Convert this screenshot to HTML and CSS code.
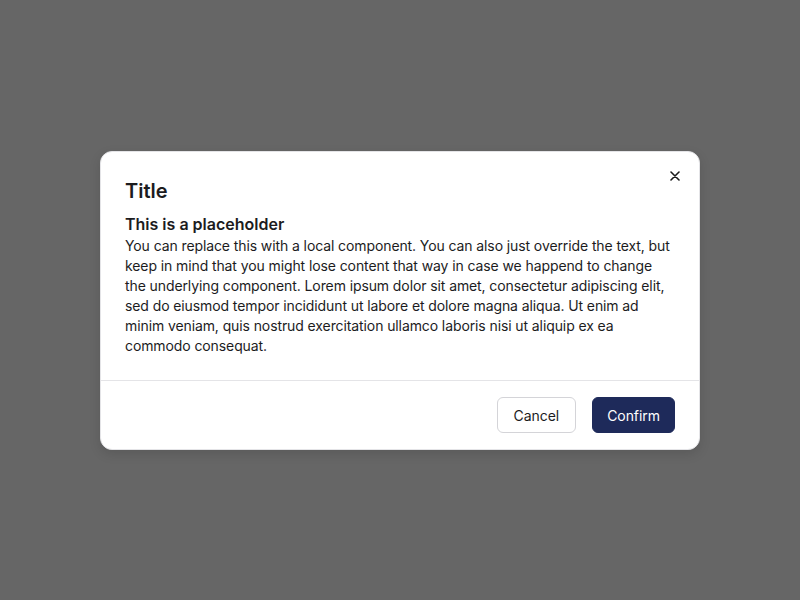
FILE: index.html
```html
<!DOCTYPE html>
<html>
<head>
<meta charset="utf-8">
<link rel="stylesheet" href="styles.css">
</head>
<body>
<div class="overlay">
  <div class="modal">
    <button class="close" aria-label="Close">
      <svg width="10" height="10" viewBox="0 0 10 10"><path d="M1 1L9 9M9 1L1 9" stroke="#1a1a1a" stroke-width="1.6" stroke-linecap="round"/></svg>
    </button>
    <div class="content">
      <h1 class="title">Title</h1>
      <h2 class="subtitle">This is a placeholder</h2>
      <p class="body">You can replace this with a local component. You can also just override the text, but keep in mind that you might lose content that way in case we happend to change the underlying component. Lorem ipsum dolor sit amet, consectetur adipiscing elit, sed do eiusmod tempor incididunt ut labore et dolore magna aliqua. Ut enim ad minim veniam, quis nostrud exercitation ullamco laboris nisi ut aliquip ex ea commodo consequat.</p>
    </div>
    <div class="footer">
      <button class="btn btn-secondary">Cancel</button>
      <button class="btn btn-primary">Confirm</button>
    </div>
  </div>
</div>
</body>
</html>
```
FILE: styles.css
```css
html, body {
  margin: 0;
  padding: 0;
  height: 100%;
}
body {
  background: #666666;
  font-family: Inter, "Noto Sans", sans-serif;
  color: #1c1c1e;
}
.overlay {
  height: 100%;
  display: flex;
  align-items: center;
  justify-content: center;
}
.modal {
  position: relative;
  width: 598px;
  background: #ffffff;
  border: 1px solid #e4e4e7;
  border-radius: 12px;
  box-shadow: 0 4px 12px rgba(0,0,0,0.12);
  margin-top: 1px;
}
.close {
  position: absolute;
  top: 17px;
  right: 17px;
  width: 14px;
  height: 14px;
  padding: 0;
  border: none;
  background: none;
  display: flex;
  align-items: center;
  justify-content: center;
}
.content {
  padding: 24px 24px 24px;
}
.title {
  margin: 0;
  font-size: 20px;
  line-height: 30px;
  font-weight: 600;
}
.subtitle {
  margin: 7px 0 0;
  font-size: 16px;
  line-height: 22px;
  font-weight: 600;
}
.body {
  margin: 1px 0 0;
  font-size: 14px;
  line-height: 20px;
  font-weight: 400;
  letter-spacing: -0.1px;
}
.footer {
  border-top: 1px solid #e4e4e7;
  padding: 16px 24px;
  display: flex;
  justify-content: flex-end;
  gap: 16px;
}
.btn {
  height: 36px;
  padding: 0 16px;
  border-radius: 6px;
  font-family: Inter, "Noto Sans", sans-serif;
  font-size: 14px;
  font-weight: 400;
  letter-spacing: -0.05px;
}
.btn-secondary {
  background: #ffffff;
  border: 1px solid #d4d4d8;
  color: #1c1c1e;
}
.btn-primary {
  padding: 0 14px;
  background: #1e2a5a;
  border: 1px solid #1e2a5a;
  color: #ffffff;
}
```
